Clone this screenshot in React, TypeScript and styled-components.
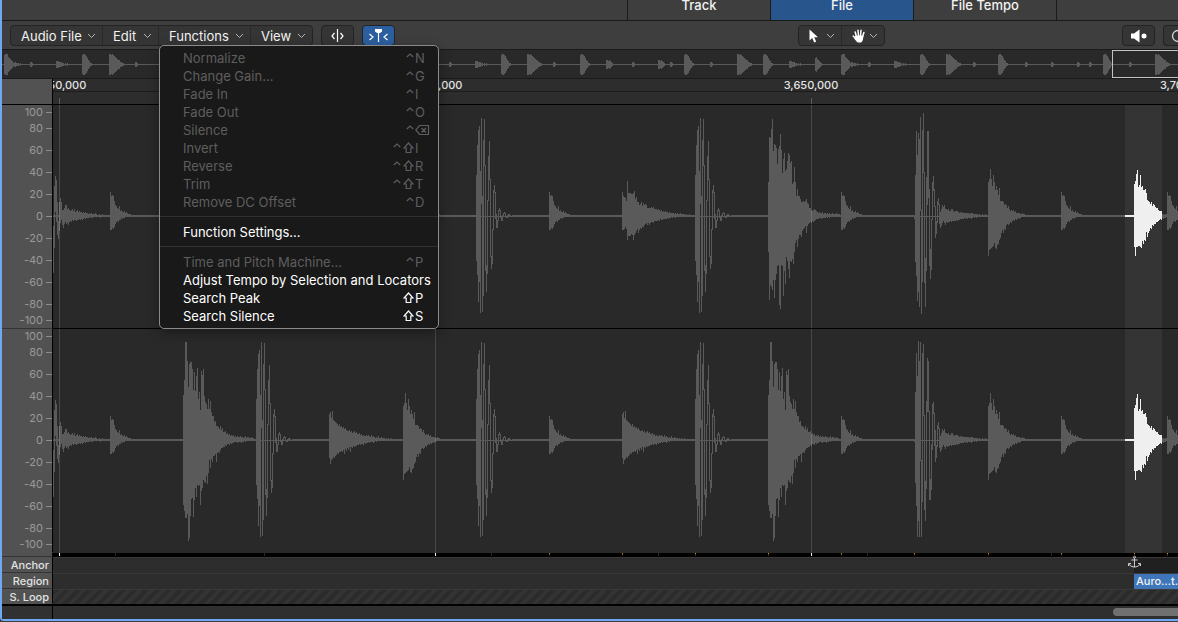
import React from "react";
import styled, { createGlobalStyle, css } from "styled-components";

const GlobalStyle = createGlobalStyle`
  *, *::before, *::after { box-sizing: border-box; }
  body {
    margin: 0;
    background: #3f3f3f;
    font-family: Inter, "Liberation Sans", sans-serif;
    font-size: 13px;
    color: #f2f2f2;
  }
  button { font: inherit; color: inherit; padding: 0; margin: 0; }
`;

/* ---------- waveform data ---------- */

type Column = [number, number];
type Hit = { x: number; columns: Column[]; thin?: boolean };

const envelope = (up: number[], down: number[]): Column[] =>
  Array.from({ length: Math.max(up.length, down.length) }, (_, i): Column => [
    -(up[i] ?? 1),
    (down[i] ?? 1) - 1,
  ]);

const kick: Column[] = [
  [-41, 44], [-71, 58], [-86, 85], [-90, 65], [-45, 96], [-98, -13], [-20, 95], [-76, 79],
  [-97, -51], [-51, 54], [49, 75], [-16, 57], [-60, -16], [-75, -37], [-37, 40], [40, 52],
  [13, 47], [-26, 13], [-31, -24], [-24, 2], [-2, 11], [4, 11], [-6, 4], [-8, -6],
  [-6, 1], [1, 4], [-1, 4], [-3, -1], [-4, -3], [-3, 0], [0, 1], [-1, 1],
  [-2, 0], [-2, -1], [-1, 0], [0, 0], [-1, 0],
];

const kickRoomTail: Column[] = [
  [-10, 21], [5, 17], [-15, 6],
  [-18, -12], [-12, 7], [-4, 11], [-7, 9], [-11, 6], [-9, 4], [-11, 6], [-7, 8],
  [-7, 5], [-6, 6], [-7, 5], [-5, 5], [-5, 4], [-7, 5], [-7, 4], [-5, 4],
  [-4, 4], [-5, 4], [-5, 3], [-5, 4], [-4, 3], [-3, 3], [-4, 2], [-3, 2],
  [-4, 2], [-3, 2], [-3, 1], [-3, 2], [-3, 1], [-3, 2], [-3, 1], [-2, 1],
  [-3, 1], [-3, 2], [-3, 1], [-2, 0], [-2, 1], [-2, 0], [-2, 1], [-2, 0],
  [-1, 0], [-2, 0], [-1, 0], [-1, 0], [-2, 0], [-1, 0], [-1, 0], [-2, 0],
];

const kickRoom: Column[] = [
  [-1, 2], [-41, 45], [-85, 59], [-61, 84], [-83, 75], [-77, 90], [-99, -6], [-6, 97],
  [-86, 65], [-103, -44], [-44, 66], [42, 90], [-39, 54], [-85, -12], [-85, -19], [-27, 49],
  [33, 62], [3, 53], [-34, 3], [-40, -26], [-27, -10],
  ...kickRoomTail,
];

const kickRoomSoft: Column[] = [
  [-1, 1], [-48, 42], [-87, 65], [-64, 96], [-99, 80], [-79, 96], [-98, 20], [20, 96],
  [-87, 61], [-96, -25], [-25, 69], [41, 80], [-39, 48], [-82, -29], [-79, -29], [-29, 59],
  [39, 59], [4, 49], [-36, 9], [-38, -27], [-27, 5],
  ...kickRoomTail,
];

const kickTail: Column[] = [
  [10, 56], [-30, 31], [-40, -5], [-36, 5], [-14, 18], [5, 22], [-14, 14], [-18, 6], [-14, 3],
  [-6, 8], [-6, 11], [-8, 7], [-11, 5], [-11, 7], [-7, 6], [-8, 8], [-6, 5], [-5, 4],
  [-6, 5], [-7, 3], [-5, 4], [-7, 3], [-4, 3], [-5, 4], [-6, 3], [-4, 3], [-5, 2],
  [-4, 3], [-4, 2], [-3, 3], [-4, 2], [-3, 1], [-4, 2], [-3, 1], [-3, 1], [-2, 1],
  [-3, 1], [-2, 0], [-3, 1], [-2, 1], [-2, 0], [-2, 0], [-3, 0], [-2, 0], [-1, 0],
  [-1, 0], [-2, 0], [-1, 1], [-1, 0], [-2, 0],
];

const tick = envelope(
  [24, 20, 21, 20, 15, 11, 10, 8, 7, 10, 5, 6, 4, 4, 5, 3, 4, 3, 2, 2, 2],
  [14, 14, 12, 13, 11, 8, 6, 5, 6, 4, 4, 2, 3, 2, 2],
);

const shaker = envelope(
  [24, 20, 19, 18, 15, 35, 23, 23, 23, 22, 22, 23, 25, 17, 19, 14, 14, 11, 12, 14, 10, 13, 11, 12,
    11, 8, 8, 8, 8, 9, 8, 9, 7, 7, 7, 6, 7, 6, 5, 6, 4, 5, 4, 5, 4, 4, 3, 4, 3, 3, 3, 3, 2, 3, 2,
    3, 2, 2, 3, 2, 2, 2, 2, 1, 2, 1, 1, 2],
  [14, 14, 13, 11, 13, 24, 20, 20, 20, 18, 19, 24, 19, 17, 15, 13, 17, 14, 12, 13, 11, 11, 9, 8, 7,
    9, 7, 9, 7, 6, 6, 7, 5, 5, 5, 5, 4, 5, 3, 4, 4, 3, 3, 3, 3, 2, 3, 2, 2, 1, 2, 1, 1, 2],
);

const shakerSoft = envelope(
  [26, 28, 22, 29, 20, 19, 18, 17, 16, 14, 16, 13, 14, 12, 13, 11, 12, 10, 9, 9, 10, 8, 9, 7, 8, 9,
    7, 8, 6, 6, 7, 5, 6, 4, 5, 4, 4, 5, 4, 5, 4, 3, 5, 3, 4, 3, 2, 3, 2, 4, 2, 2, 3, 2, 2, 2, 1, 2,
    1, 2, 1, 1, 2],
  [18, 24, 20, 19, 17, 18, 16, 15, 13, 14, 12, 12, 11, 12, 10, 14, 9, 11, 8, 10, 7, 12, 7, 8, 6, 7,
    6, 6, 5, 5, 4, 5, 4, 4, 5, 3, 4, 3, 3, 2, 3, 2, 2, 2, 3, 2, 1, 2],
);

const burst = envelope(
  [34, 79, 78, 87, 97, 65, 72, 71, 68, 52, 67, 70, 82, 66, 43, 57, 63, 45, 47, 55, 63, 61, 53, 55,
    32, 34, 49, 34, 20, 27, 20, 20, 17, 14, 14, 15, 14, 15, 17, 13, 12, 8, 8, 6, 5, 6, 7, 6, 5, 4,
    3, 4, 3, 3, 4, 2, 3, 3, 2, 3, 2, 3, 2, 2, 3, 2, 2, 2, 3, 2, 2, 2],
  [36, 84, 69, 71, 74, 64, 82, 64, 58, 50, 49, 89, 93, 49, 50, 80, 55, 68, 41, 45, 53, 62, 45, 46,
    43, 48, 36, 27, 24, 31, 23, 19, 19, 21, 15, 13, 12, 10, 17, 10, 8, 7, 6, 7, 5, 6, 5, 4, 3, 3,
    3, 2, 2, 3, 2, 2, 2, 2, 1, 2, 1, 2],
);

const burstLoud = envelope(
  [45, 60, 98, 98, 79, 53, 76, 78, 78, 71, 50, 68, 49, 64, 72, 41, 48, 30, 69, 65, 71, 44, 38, 36,
    31, 41, 31, 39, 28, 24, 24, 18, 19, 14, 14, 13, 11, 14, 10, 12, 8, 8, 9, 6, 7, 5, 6, 4, 5, 4,
    5, 3, 4, 3, 4, 3, 3, 4, 3, 3, 2, 3, 4, 2, 3, 3, 2, 2, 3, 2, 2],
  [65, 71, 78, 78, 74, 101, 98, 76, 59, 58, 77, 60, 48, 57, 45, 46, 45, 65, 51, 48, 40, 42, 43, 36,
    44, 33, 20, 28, 19, 22, 16, 16, 14, 22, 13, 12, 13, 10, 8, 8, 7, 7, 5, 6, 4, 4, 5, 3, 4, 3,
    3, 2, 2, 2, 3, 2, 2, 2, 3, 2, 2, 1, 2],
);

const snare = envelope(
  [34, 37, 47, 37, 30, 41, 34, 26, 30, 26, 21, 28, 15, 15, 15, 14, 11, 12, 11, 8, 10, 7, 5, 6, 5,
    6, 4, 5, 3, 3, 3, 3, 2, 2, 3, 2, 2],
  [40, 34, 33, 32, 31, 30, 27, 32, 33, 29, 28, 24, 22, 17, 14, 17, 13, 14, 9, 8, 9, 8, 6, 7, 5, 4,
    5, 3, 4, 3, 2, 3, 2],
);

const snareSelected = envelope(
  [32, 35, 42, 46, 29, 31, 41, 29, 30, 26, 26, 27, 23, 16, 15, 14, 12, 14, 10, 12, 11, 9, 8, 8, 6,
    5, 5, 5],
  [31, 40, 31, 31, 30, 30, 31, 32, 25, 28, 24, 25, 16, 21, 17, 15, 12, 13, 9, 10, 8, 8, 6, 6, 5, 4,
    3, 4],
);

const leftHits: Hit[] = [
  { x: 53, columns: kickTail },
  { x: 110, columns: tick },
  { x: 183, columns: burst },
  { x: 256, columns: kick, thin: true },
  { x: 329, columns: shaker },
  { x: 403, columns: snare },
  { x: 476, columns: kick, thin: true },
  { x: 549, columns: tick },
  { x: 622, columns: shaker },
  { x: 695, columns: kick, thin: true },
  { x: 768, columns: burst },
  { x: 841, columns: tick },
  { x: 914, columns: kickRoom, thin: true },
  { x: 988, columns: snare },
  { x: 1061, columns: tick },
  { x: 1167, columns: tick },
];

const rightHits: Hit[] = leftHits.map((hit) => {
  if (hit.columns === burst) return { ...hit, columns: burstLoud };
  if (hit.columns === shaker) return { ...hit, columns: shakerSoft };
  if (hit.columns === kickRoom) return { ...hit, columns: kickRoomSoft };
  return hit;
});

const GUTTER = 53;
const CENTER = 111;
const selection = { from: 1125, to: 1162 };
const majorTicks = [59, 435, 811, 1187];
const minorTicks = [115, 264, 491, 658, 867, 1051];
const transients = [549, 622, 695, 768, 841, 914, 988, 1061, 1134, 1167];

const columnsPath = (x: number, columns: Column[], center: number) =>
  columns
    .map(([top, bottom], i) => `M${x + i} ${center + top}h1V${center + bottom + 1}h-1z`)
    .join("");

const hitsPath = (hits: Hit[]) => {
  let path = "";
  let start = GUTTER;
  hits.forEach((hit) => {
    path += columnsPath(hit.x, hit.columns, CENTER);
    if (hit.thin) {
      path += `M${start} ${CENTER - 1}H${hit.x}V${CENTER + 1}H${start}z`;
      start = hit.x + Math.min(hit.columns.length, 36);
      path += `M${hit.x} ${CENTER}H${start}V${CENTER + 1}H${hit.x}z`;
    }
  });
  return `${path}M${start} ${CENTER - 1}H4000V${CENTER + 1}H${start}z`;
};

type OverviewKind = "small" | "soft" | "low" | "mid" | "kick" | "burst" | "boom";

const overviewShapes: Record<OverviewKind, number[]> = {
  small: [2, 2, 1],
  soft: [3, 3, 3, 2, 2, 2, 1, 1, 0, 1, 0, 1],
  low: [4, 4, 3, 4, 3, 2, 1],
  mid: [6, 7, 5, 4, 3, 2, 1],
  kick: [9, 10, 10, 9, 8, 6, 4, 3, 1, 1],
  burst: [10, 10, 9, 10, 9, 8, 7, 6, 5, 4, 4, 2, 2, 1, 1],
  boom: [9, 10, 10, 10, 7, 6, 5, 4, 3, 1, 2, 2, 1, 1, 1, 0, 1],
};

const overviewHits: [number, OverviewKind][] = [
  [4, "boom"], [30, "small"], [56, "soft"], [82, "kick"], [109, "burst"], [135, "small"],
  [449, "small"], [475, "soft"], [501, "kick"], [527, "burst"], [553, "small"], [580, "kick"],
  [606, "low"], [632, "small"], [658, "low"], [670, "small"], [684, "kick"], [710, "small"],
  [737, "burst"], [763, "kick"], [789, "soft"], [815, "mid"], [841, "boom"], [868, "small"],
  [894, "soft"], [920, "kick"], [946, "burst"], [973, "small"], [998, "kick"], [1025, "small"],
  [1051, "small"], [1077, "small"], [1089, "small"], [1103, "kick"], [1129, "small"],
  [1155, "burst"],
];

const overviewPath = overviewHits
  .map(([x, kind]) =>
    columnsPath(x, overviewShapes[kind].map((h): Column => [-h, h]), 14),
  )
  .join("");

/* ---------- window frame ---------- */

const Window = styled.main`
  min-height: 100vh;
  display: flex;
  flex-direction: column;
  overflow: hidden;
`;

const Frame = styled.div`
  border-left: 2px solid #6fa8f3;
  border-bottom: 2px solid #6fa8f3;
  border-bottom-left-radius: 4px;
  background: #2d2d2d;
`;

const TabBar = styled.nav`
  display: flex;
  justify-content: flex-end;
  height: 21px;
  padding-right: 121px;
  background: #3e3e3e;
  border-bottom: 1px solid #1b1b1b;
`;

const Tab = styled.button<{ $active?: boolean }>`
  width: 143px;
  border: 0;
  border-left: 1px solid #1b1b1b;
  background: ${(p) => (p.$active ? "#28558c" : "transparent")};
  line-height: 10px;
  padding-bottom: 10px;
  font-weight: 500;
  &:last-child {
    width: 144px;
    border-right: 1px solid #1b1b1b;
  }
`;

const Toolbar = styled.div`
  display: flex;
  height: 28px;
  padding: 4px 0 3px 8px;
  background: #3e3e3e;
`;

const ToolbarStart = styled.div`
  flex: 1;
  display: flex;
  gap: 8px;
`;

const ToolbarEnd = styled.div`
  flex: 0 0 293px;
  display: flex;
  justify-content: flex-end;
  gap: 8px;
`;

const Group = styled.div`
  display: flex;
  height: 21px;
  border: 1px solid #232323;
  border-radius: 4px;
  background: #353535;
`;

const Segment = styled.div`
  position: relative;
  display: flex;
  & + & {
    border-left: 1px solid #292929;
  }
`;

const MenuButton = styled.button<{ $width: number }>`
  display: flex;
  align-items: center;
  justify-content: space-between;
  width: ${(p) => p.$width}px;
  padding: 0 6px 0 10px;
  border: 0;
  background: transparent;
  white-space: nowrap;
`;

const ToolButton = styled.button<{ $active?: boolean; $clipped?: boolean }>`
  display: flex;
  align-items: center;
  justify-content: center;
  width: 33px;
  height: 21px;
  border: 1px solid #232323;
  border-radius: 4px;
  background: ${(p) => (p.$active ? "#2c5f9f" : "#353535")};
  ${(p) =>
    p.$clipped &&
    css`
      width: 15px;
      justify-content: flex-start;
      padding-left: 7px;
      border-right: 0;
      border-radius: 4px 0 0 4px;
      overflow: hidden;
    `}
  svg { flex: none; }
`;

/* ---------- drop-down menu ---------- */

const Menu = styled.div`
  position: absolute;
  z-index: 5;
  top: 19px;
  left: 0;
  width: 280px;
  padding: 3px 0;
  border: 1px solid #8b8b8b;
  border-radius: 5px;
  background: #191919;
  box-shadow: 0 4px 12px rgba(0, 0, 0, 0.35);
`;

const MenuItem = styled.button`
  display: flex;
  align-items: center;
  width: 100%;
  height: 18px;
  padding: 0 8px 0 23px;
  border: 0;
  background: transparent;
  color: #ffffff;
  white-space: nowrap;
  &:disabled {
    color: #5e5e5e;
  }
`;

const Modifiers = styled.span`
  display: flex;
  justify-content: flex-end;
  gap: 2px;
  margin-left: auto;
  padding-right: 1px;
`;

const Key = styled.span`
  display: flex;
  width: 15px;
`;

const Separator = styled.hr`
  height: 1px;
  margin: 5px 0 6px;
  border: 0;
  background: #303030;
`;

/* ---------- editor ---------- */

const Overview = styled.div`
  position: relative;
  height: 30px;
  background: #292929;
  border-top: 1px solid #1a1a1a;
  border-bottom: 1px solid #1a1a1a;
`;

const ViewRange = styled.div`
  position: absolute;
  top: 0;
  right: 0;
  width: 66px;
  height: 28px;
  border: 1px solid #c4c4c4;
  border-right: 0;
`;

const Drawing = styled.svg`
  display: block;
  width: 100%;
  height: 100%;
  shape-rendering: crispEdges;
`;

const Row = styled.div<{ $height: number }>`
  display: flex;
  height: ${(p) => p.$height}px;
`;

const Gutter = styled.div<{ $line?: string }>`
  flex: 0 0 51px;
  border-right: 1px solid #000;
  border-bottom: 1px solid ${(p) => p.$line ?? "#333"};
  background: #525252;
`;

const Lane = styled.div<{ $line?: string }>`
  position: relative;
  flex: 1;
  min-width: 0;
  overflow: hidden;
  background: #292929;
  border-bottom: ${(p) => (p.$line ? `1px solid ${p.$line}` : "0")};
`;

const Ruler = styled(Lane)`
  background: #2d2d2d;
  border-bottom: 1px solid #000;
`;

const RulerLabels = styled.div`
  display: flex;
  height: 13px;
  border-bottom: 1px solid #1c1c1c;
`;

const RulerLabel = styled.span`
  flex: 0 0 376px;
  font-size: 11px;
  line-height: 13px;
  font-weight: 500;
  text-align: center;
  color: #e4e4e4;
  &:first-child { margin-left: -182px; }
`;

const RulerTicks = styled.div`
  height: 12px;
`;

const ScaleLabel = styled.div<{ $tight?: boolean }>`
  display: flex;
  align-items: center;
  justify-content: flex-end;
  gap: 3px;
  height: 14px;
  margin-top: ${(p) => (p.$tight ? 2 : 8)}px;
  font-size: 11px;
  color: #999999;
  &:first-child { margin-top: 0; }
  &::after {
    content: "";
    width: 6px;
    height: 1px;
    background: #8c8c8c;
  }
`;

const TrackLabel = styled(Gutter)`
  padding: 1px 3px 0 0;
  text-align: right;
  font-size: 11px;
  line-height: 15px;
  font-weight: 500;
  color: #e2e2e2;
`;

const TrackLane = styled(Lane)`
  display: flex;
  justify-content: flex-end;
  overflow: visible;
  background: #2d2d2d;
  border-top: 1px solid #393939;
`;

const LoopLane = styled(Lane)`
  border-top: 1px solid #393939;
  background: repeating-linear-gradient(135deg, #2b2b2b 0 4px, #333333 4px 8px);
`;

const AnchorTail = styled.div`
  width: 44px;
  background: #202020;
`;

const AnchorMark = styled.svg`
  position: absolute;
  right: 37px;
  top: -2px;
`;

const RegionBlock = styled.div`
  width: 44px;
  padding-left: 2px;
  overflow: hidden;
  background: #3f76b9;
  font-size: 11px;
  line-height: 15px;
  font-weight: 500;
  white-space: nowrap;
`;

const ScrollRow = styled.div`
  display: flex;
  height: 15px;
  border-top: 2px solid #000;
`;

const ScrollCorner = styled.div`
  flex: 0 0 51px;
  border-right: 1px solid #000;
  background: #313131;
`;

const ScrollTrack = styled.div`
  flex: 1;
  display: flex;
  align-items: flex-start;
  justify-content: flex-end;
  padding-top: 2px;
  background: #2f2f2f;
`;

const ScrollThumb = styled.div`
  width: 65px;
  height: 8px;
  border-radius: 4px 0 0 4px;
  background: #707070;
`;

/* ---------- icons ---------- */

const Chevron = () => (
  <svg width="9" height="6" viewBox="0 0 9 6" fill="none" stroke="#b4b4b4" aria-hidden="true">
    <path d="M1 1l3.500 3.500L8 1" />
  </svg>
);

const PlayheadIcon = () => (
  <svg width="15" height="13" viewBox="0 0 15 13" fill="none" stroke="#fff" aria-hidden="true">
    <path d="M7.500 0v13M4.500 4L2 7l2.500 3M10.500 4L13 7l-2.500 3" strokeWidth="1.200" />
  </svg>
);

const CatchIcon = () => (
  <svg width="21" height="15" viewBox="0 0 21 15" fill="none" stroke="#fff" aria-hidden="true">
    <path d="M10.500 3v11" strokeWidth="1.200" />
    <path d="M7 1h7v2.500L12 5H9L7 3.500z" fill="#fff" stroke="none" />
    <path d="M1.500 6L5 9l-3.500 3M19.500 6L16 9l3.500 3" strokeWidth="1.200" />
  </svg>
);

const PointerIcon = () => (
  <svg width="10" height="14" viewBox="0 0 10 14" fill="#fff" aria-hidden="true">
    <path d="M.5.500v11l2.700-2.500 2 4.500 2-.9-2-4.300h3.800z" />
  </svg>
);

const HandIcon = () => (
  <svg width="14" height="14" viewBox="0 0 14 14" fill="none" stroke="#fff" strokeLinecap="round" strokeLinejoin="round" aria-hidden="true">
    <path d="M4.500 8L3.200 3M6.500 7L6 1.200M8.500 7l.5-5.700M10.500 8l1.400-4.500M4 10L1.200 7" strokeWidth="1.500" />
    <path d="M4 7h7l-.7 4-1 2H5.500L3 10z" fill="#fff" />
  </svg>
);

const SpeakerIcon = () => (
  <svg width="18" height="14" viewBox="0 0 18 14" fill="#fff" aria-hidden="true">
    <path d="M1 4.500h3L9.500.500v13L4 9.500H1z" />
    <circle cx="14" cy="7" r="2.500" />
  </svg>
);

const LoopIcon = () => (
  <svg width="16" height="14" viewBox="0 0 16 14" fill="none" stroke="#d8d8d8" aria-hidden="true">
    <circle cx="7" cy="7" r="5.500" strokeWidth="1.300" />
  </svg>
);

const AnchorIcon = () => (
  <AnchorMark width="13" height="12" viewBox="0 0 13 12" fill="none" stroke="#c9c9c9" aria-hidden="true">
    <circle cx="6.500" cy="1.200" r="1" />
    <path d="M6.500 2v9M3.500 4h6M.5 10V7.500H3M12.500 10V7.500H10M1 8l1.500 2 4 1.200 4-1.200L12 8" />
  </AnchorMark>
);

const Caret = () => (
  <svg width="8" height="12" viewBox="0 0 8 12" fill="none" stroke="currentColor" aria-label="Control">
    <path d="M.8 5L4 2l3.200 3" strokeWidth="1.200" />
  </svg>
);

const Shift = () => (
  <svg width="11" height="12" viewBox="0 0 11 12" fill="none" stroke="currentColor" aria-label="Shift">
    <path d="M5.500 1l4.500 5H7.800v4.500H3.200V6H1z" strokeWidth="1.200" />
  </svg>
);

const DeleteKey = () => (
  <svg width="15" height="12" viewBox="0 0 15 12" fill="none" stroke="currentColor" aria-label="Delete">
    <path d="M4.500 1.500h9v9h-9L.8 6zM6.500 4l4.500 4.500M11 4L6.500 8.500" strokeWidth="1.200" />
  </svg>
);

/* ---------- components ---------- */

type Command = { label: string; shift?: boolean; ctrl?: boolean; keyName?: string; enabled?: boolean };

const commandGroups: Command[][] = [
  [
    { label: "Normalize", ctrl: true, keyName: "N" },
    { label: "Change Gain…", ctrl: true, keyName: "G" },
    { label: "Fade In", ctrl: true, keyName: "I" },
    { label: "Fade Out", ctrl: true, keyName: "O" },
    { label: "Silence", ctrl: true, keyName: "delete" },
    { label: "Invert", ctrl: true, shift: true, keyName: "I" },
    { label: "Reverse", ctrl: true, shift: true, keyName: "R" },
    { label: "Trim", ctrl: true, shift: true, keyName: "T" },
    { label: "Remove DC Offset", ctrl: true, keyName: "D" },
  ],
  [{ label: "Function Settings…", enabled: true }],
  [
    { label: "Time and Pitch Machine…", ctrl: true, keyName: "P" },
    { label: "Adjust Tempo by Selection and Locators", enabled: true },
    { label: "Search Peak", shift: true, keyName: "P", enabled: true },
    { label: "Search Silence", shift: true, keyName: "S", enabled: true },
  ],
];

const FunctionsMenu = () => (
  <Menu role="menu" aria-label="Functions">
    {commandGroups.map((group, i) => (
      <React.Fragment key={i}>
        {i > 0 && <Separator />}
        {group.map((command) => (
          <MenuItem key={command.label} role="menuitem" disabled={!command.enabled}>
            {command.label}
            {command.keyName && (
              <>
                <Modifiers>
                  {command.ctrl && <Caret />}
                  {command.shift && <Shift />}
                </Modifiers>
                <Key>{command.keyName === "delete" ? <DeleteKey /> : command.keyName}</Key>
              </>
            )}
          </MenuItem>
        ))}
      </React.Fragment>
    ))}
  </Menu>
);

const scale = [100, 80, 60, 40, 20, 0, -20, -40, -60, -80, -100];

const Scale = ({ line }: { line?: string }) => (
  <Gutter $line={line}>
    {scale.map((value) => (
      <ScaleLabel key={value} $tight={value === 80 || value === -100}>
        {value}
      </ScaleLabel>
    ))}
  </Gutter>
);

const Waveform = ({ hits, label }: { hits: Hit[]; label: string }) => (
  <Drawing role="img" aria-label={label}>
    <g transform={`translate(${-GUTTER} 0)`}>
      <rect x={selection.from} y="0" width={selection.to - selection.from} height="224" fill="#343434" />
      <path d={hitsPath(hits)} fill="#5a5a5a" />
      <path
        d={`M${selection.from} ${CENTER - 1}h9v2h-9z${columnsPath(1134, snareSelected, CENTER)}`}
        fill="#efefef"
      />
      <path d={columnsPath(selection.to, [[-2, 1], [-2, 2], [-1, 1], [-2, 1], [-2, 0]], CENTER)} fill="#5a5a5a" />
      {majorTicks.map((x) => (
        <rect key={x} x={x} y="0" width="1" height="224" fill="#fff" fillOpacity="0.15" />
      ))}
    </g>
  </Drawing>
);

const TransientStrip = () => (
  <Drawing role="img" aria-label="Transients">
    <g transform={`translate(${-GUTTER} 0)`}>
      {minorTicks.map((x) => (
        <rect key={x} x={x} y="0" width="1" height="3" fill="#2a2a2a" />
      ))}
      {transients.map((x) => (
        <g key={x}>
          <rect x={x} y="0" width="1" height="3" fill="#3a3026" />
          <rect x={x} y="0" width="1" height="1" fill="#e0862a" />
        </g>
      ))}
      {majorTicks.map((x) => (
        <rect key={x} x={x} y="0" width="1" height="3" fill="#f0f0f0" />
      ))}
    </g>
  </Drawing>
);

const StripLane = styled(Lane)`
  background: #000;
`;

export default function App() {
  return (
    <Window>
      <GlobalStyle />
      <Frame>
        <TabBar>
          <Tab>Track</Tab>
          <Tab $active>File</Tab>
          <Tab>File Tempo</Tab>
        </TabBar>
        <Toolbar>
          <ToolbarStart>
            <Group>
              <Segment>
                <MenuButton $width={91}>Audio File<Chevron /></MenuButton>
              </Segment>
              <Segment>
                <MenuButton $width={55}>Edit<Chevron /></MenuButton>
              </Segment>
              <Segment>
                <MenuButton $width={91} aria-expanded="true">Functions<Chevron /></MenuButton>
                <FunctionsMenu />
              </Segment>
              <Segment>
                <MenuButton $width={61}>View<Chevron /></MenuButton>
              </Segment>
            </Group>
            <ToolButton aria-label="Playhead"><PlayheadIcon /></ToolButton>
            <ToolButton $active aria-label="Catch playhead"><CatchIcon /></ToolButton>
          </ToolbarStart>
          <Group>
            <Segment>
              <MenuButton $width={42} aria-label="Pointer tool"><PointerIcon /><Chevron /></MenuButton>
            </Segment>
            <Segment>
              <MenuButton $width={42} aria-label="Hand tool"><HandIcon /><Chevron /></MenuButton>
            </Segment>
          </Group>
          <ToolbarEnd>
            <ToolButton aria-label="Prelisten"><SpeakerIcon /></ToolButton>
            <ToolButton $clipped aria-label="Cycle"><LoopIcon /></ToolButton>
          </ToolbarEnd>
        </Toolbar>

        <Overview>
          <Drawing role="img" aria-label="Overview">
            <g transform="translate(-2 0)">
              <rect x="2" y="14" width="4000" height="1" fill="#5a5a5a" />
              <path d={overviewPath} fill="#5a5a5a" />
            </g>
          </Drawing>
          <ViewRange />
        </Overview>

        <Row $height={26}>
          <Gutter $line="#000" />
          <Ruler>
            <RulerLabels>
              <RulerLabel>3,550,000</RulerLabel>
              <RulerLabel>3,600,000</RulerLabel>
              <RulerLabel>3,650,000</RulerLabel>
              <RulerLabel>3,700,000</RulerLabel>
            </RulerLabels>
            <RulerTicks>
              <Drawing aria-hidden="true">
                <g transform={`translate(${-GUTTER} 0)`}>
                  {majorTicks.map((x) => (
                    <rect key={x} x={x} y="6" width="1" height="6" fill="#5c5c5c" />
                  ))}
                </g>
              </Drawing>
            </RulerTicks>
          </Ruler>
        </Row>

        <Row $height={224}>
          <Scale />
          <Lane $line="#000">
            <Waveform hits={leftHits} label="Left channel" />
          </Lane>
        </Row>
        <Row $height={224}>
          <Scale line="#525252" />
          <Lane>
            <Waveform hits={rightHits} label="Right channel" />
          </Lane>
        </Row>
        <Row $height={4}>
          <Gutter />
          <StripLane>
            <TransientStrip />
          </StripLane>
        </Row>

        <Row $height={16}>
          <TrackLabel>Anchor</TrackLabel>
          <TrackLane>
            <AnchorTail />
            <AnchorIcon />
          </TrackLane>
        </Row>
        <Row $height={16}>
          <TrackLabel>Region</TrackLabel>
          <TrackLane>
            <RegionBlock>Auro…t.</RegionBlock>
          </TrackLane>
        </Row>
        <Row $height={15}>
          <TrackLabel $line="#525252">S. Loop</TrackLabel>
          <LoopLane />
        </Row>

        <ScrollRow>
          <ScrollCorner />
          <ScrollTrack>
            <ScrollThumb />
          </ScrollTrack>
        </ScrollRow>
      </Frame>
    </Window>
  );
}
